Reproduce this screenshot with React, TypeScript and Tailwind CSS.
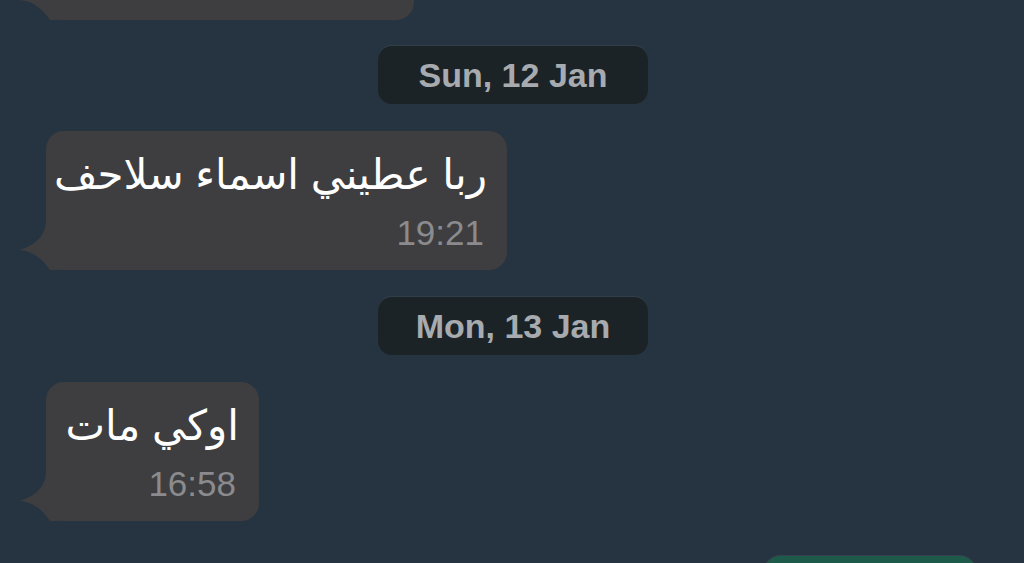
import React from 'react';

const Tail: React.FC<{ color: string }> = ({ color }) => (
  <svg
    className="absolute -left-[26px] bottom-0"
    width="40"
    height="50"
    viewBox="0 0 40 50"
  >
    <path d="M26 0 C26 14 18 24 0 30 C12 31 22 38 30 50 L40 50 L40 0 Z" fill={color} />
  </svg>
);

const Bubble: React.FC<{ text?: string; time?: string; width: string; className?: string }> = ({ text, time, width, className }) => (
  <div className={`relative ml-[46px] ${width} h-[139px] shrink-0 ${className ?? ''}`}>
    <Tail color="#3e3e40" />
    <div className="relative h-full rounded-[18px] bg-[#3e3e40] pl-3 pr-5 pt-[16px]">
      {text && (
        <div dir="rtl" className="text-right text-[42px] leading-[56px] text-white whitespace-nowrap">
          {text}
        </div>
      )}
      {time && (
        <div className="mt-[10px] text-right text-[35px] leading-[40px] text-[#8b8b8e] pr-[3px]">{time}</div>
      )}
    </div>
  </div>
);

const DatePill: React.FC<{ label: string }> = ({ label }) => (
  <div className="flex justify-center pl-[2px]">
    <div className="flex h-[58px] w-[270px] items-center justify-center rounded-[14px] bg-[#1c2327] shadow-[0_-1px_0_rgba(255,255,255,0.06)]">
      <span className="text-[34px] font-semibold text-[#a7abaf]">{label}</span>
    </div>
  </div>
);

export default function App() {
  return (
    <div
      className="flex h-[563px] w-[1024px] flex-col overflow-hidden bg-[#253440]"
      style={{ fontFamily: '"Liberation Sans", "DejaVu Sans", sans-serif' }}
    >
      <Bubble width="w-[368px]" className="-mt-[119px]" />
      <div className="mt-[26px]">
        <DatePill label="Sun, 12 Jan" />
      </div>
      <div className="mt-[27px]">
        <Bubble text="ربا عطيني اسماء سلاحف" time="19:21" width="w-[461px]" />
      </div>
      <div className="mt-[27px]">
        <DatePill label="Mon, 13 Jan" />
      </div>
      <div className="mt-[27px]">
        <Bubble text="اوكي مات" time="16:58" width="w-[213px]" />
      </div>
      <div className="mt-[35px] flex justify-end pr-[47px]">
        <div className="h-[60px] w-[214px] shrink-0 rounded-[18px] bg-[#1e5a4a] shadow-[0_-1px_0_rgba(255,255,255,0.08)]" />
      </div>
    </div>
  );
}
